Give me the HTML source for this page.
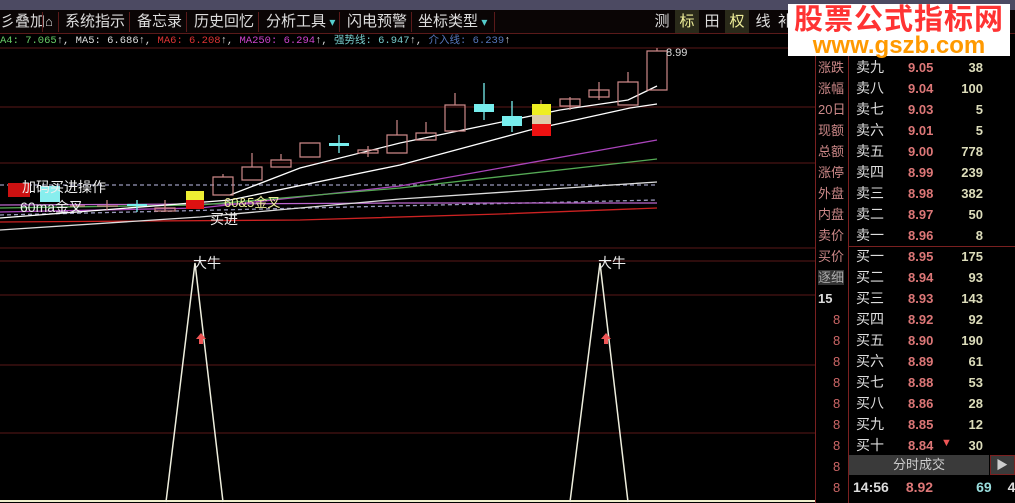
<!DOCTYPE html><html><head><meta charset="utf-8"><style>
html,body{margin:0;width:1015px;height:503px;overflow:hidden;background:#000}
body{font-family:"Liberation Sans","Noto Sans CJK SC",sans-serif;position:relative}
.a{position:absolute;white-space:nowrap}
.tb{top:10px;height:23px;font-size:15px;color:#ddd;line-height:23px}
.sep{position:absolute;top:12px;width:1px;height:20px;background:#5a1a1a}
</style></head><body>
<div class="a" style="left:0;top:0;width:1015px;height:10px;background:#4c4a62"></div>
<div class="a" style="left:0;top:10px;width:1015px;height:23px;background:#0a0505;border-bottom:1px solid #5a1a1a"></div>
<div class="a tb" style="left:0">彡叠加</div>
<div class="sep" style="left:42px"></div><div class="a tb" style="left:45px;font-size:13px">⌂</div>
<div class="sep" style="left:58px"></div><div class="a tb" style="left:65px">系统指示</div>
<div class="sep" style="left:129px"></div><div class="a tb" style="left:137px">备忘录</div>
<div class="sep" style="left:186px"></div><div class="a tb" style="left:194px">历史回忆</div>
<div class="sep" style="left:258px"></div><div class="a tb" style="left:266px">分析工具<span style="color:#5cc;font-size:12px"> ▾</span></div>
<div class="sep" style="left:339px"></div><div class="a tb" style="left:347px">闪电预警</div>
<div class="sep" style="left:411px"></div><div class="a tb" style="left:418px">坐标类型<span style="color:#5cc;font-size:12px"> ▾</span></div>
<div class="sep" style="left:494px"></div>
<div class="a tb" style="left:651px;width:22px;text-align:center">测</div>
<div class="a tb" style="left:675px;width:24px;text-align:center;background:#2a2a1a;color:#ee9">标</div>
<div class="a tb" style="left:701px;width:22px;text-align:center">田</div>
<div class="a tb" style="left:725px;width:24px;text-align:center;background:#2a2a1a;color:#ee9">权</div>
<div class="a tb" style="left:752px;width:22px;text-align:center">线</div>
<div class="a tb" style="left:778px">补</div>
<div class="a" style="left:0;top:34px;font-size:10.5px;line-height:14px;font-family:'Liberation Mono','Noto Sans CJK SC',monospace;color:#ddd"><span style="color:#6c6">A4: 7.065</span>↑, MA5: 6.686↑, <span style="color:#d33">MA6: 6.208</span>↑, <span style="color:#c4c">MA250: 6.294</span>↑, <span style="color:#7cc">强势线: 6.947</span>↑, <span style="color:#57b">介入线: 6.239</span>↑</div>
<svg class="a" style="left:0;top:0" width="815" height="503">
<g stroke="#5a1818" stroke-width="1"><line x1="0" y1="48" x2="815" y2="48"/><line x1="0" y1="107" x2="815" y2="107"/><line x1="0" y1="163" x2="815" y2="163"/><line x1="0" y1="248" x2="815" y2="248"/><line x1="0" y1="261" x2="815" y2="261"/><line x1="0" y1="295" x2="815" y2="295"/><line x1="0" y1="365" x2="815" y2="365"/><line x1="0" y1="433" x2="815" y2="433"/></g>
<line x1="0" y1="501" x2="815" y2="501" stroke="#eec" stroke-width="2"/>
<g fill="none" stroke-width="1.3">
<line x1="0" y1="185" x2="657" y2="185" stroke="#99b" stroke-dasharray="4,3"/>
<line x1="0" y1="215" x2="657" y2="200" stroke="#99b" stroke-dasharray="4,3"/>
<polyline points="0,222 300,220 500,214 657,208" stroke="#c22"/>
<polyline points="0,205 400,203 657,203" stroke="#b6c"/>
<polyline points="0,212 200,208 400,186 657,140" stroke="#a4b"/>
<polyline points="0,208 200,205 400,188 657,159" stroke="#5a5"/>
<polyline points="0,230 200,217 400,199 657,182" stroke="#ddd"/>
<polyline points="0,218 230,200 400,165 530,130 630,108 657,104" stroke="#fff"/>
<polyline points="230,195 300,168 400,143 560,110 628,100 657,86" stroke="#fff"/>
</g>
<g stroke="#c88" fill="none" stroke-width="1.2">
<path d="M223 174V177M213 177h20v18h-20z"/><path d="M252 153V167M242 167h20v13h-20z"/><path d="M281 154V160M271 160h20v7h-20z"/><path d="M300 143h20v14h-20z"/><path d="M368 146V157M358 150h20v3h-20z"/><path d="M397 120V135M387 135h20v18h-20z"/><path d="M426 122V133M416 133h20v7h-20z"/><path d="M455 93V105M445 105h20v26h-20z"/><path d="M570 97V110M560 99h20v7h-20z"/><path d="M599 82V100M589 90h20v7h-20z"/><path d="M628 72V82M618 82h20v23h-20z"/><path d="M657 48V51M647 51h20v39h-20z"/><path d="M165 200V212M155 208h20v3h-20z"/><path d="M70 206h15M107 200V210M97 206h21"/></g>
<g stroke="#7ee" stroke-width="1.3"><path d="M339 135V153M484 83V120M512 101V132M137 200V212"/></g>
<rect x="329" y="143" width="20" height="3" fill="#7ee"/><rect x="474" y="104" width="20" height="8" fill="#7ee"/><rect x="502" y="116" width="20" height="10" fill="#7ee"/><rect x="127" y="204" width="20" height="2" fill="#7ee"/>
<rect x="40" y="186" width="20" height="16" fill="#8ee"/><rect x="8" y="183" width="22" height="14" fill="#c11"/>
<rect x="186" y="191" width="18" height="9" fill="#ee3"/><rect x="186" y="200" width="18" height="9" fill="#d11"/>
<line x1="541" y1="100" x2="541" y2="104" stroke="#c88"/><rect x="532" y="104" width="19" height="11" fill="#ee2"/><rect x="532" y="115" width="19" height="9" fill="#dca"/><rect x="532" y="124" width="19" height="12" fill="#e11"/>
<g stroke="#eed" stroke-width="1.5" fill="none"><polyline points="166,502 195,263 223,502"/><polyline points="570,502 600,263 628,502"/></g>
<path d="M201 333l-5 6h3v5h4v-5h3z M606 333l-5 6h3v5h4v-5h3z" fill="#e55"/>
<g font-size="14" fill="#eee"><text x="22" y="192">加码买进操作</text><text x="20" y="212">60ma金叉</text><text x="210" y="224">买进</text><text x="193" y="268">大牛</text><text x="598" y="268">大牛</text></g>
<text x="224" y="207" font-size="13" fill="#ee9">60&amp;5金叉</text>
<text x="666" y="56" font-size="11" fill="#ddd">8.99</text>
</svg>
<div class="a" style="left:815px;top:48px;width:1px;height:455px;background:#7a2020"></div>
<div class="a" style="left:848px;top:48px;width:1px;height:455px;background:#7a2020"></div>
<div class="a" style="left:848px;top:246px;width:167px;height:1px;background:#7a2020"></div>
<div class="a" style="left:788px;top:4px;width:222px;height:52px;background:#fff;font-weight:bold;text-align:center"><div style="font-size:29px;color:#f33;line-height:32px;letter-spacing:1px">股票公式指标网</div><div style="font-size:24px;color:#f90;line-height:20px">www.gszb.com</div></div>
<div class="a" style="left:818px;top:57px;font-size:13px;color:#c88;line-height:21px;width:30px;overflow:hidden">涨跌<br>涨幅<br>20日<br>现额<br>总额<br>涨停<br>外盘<br>内盘<br>卖价<br>买价<br><span style="background:#333;color:#aaa">逐细</span><br><span style="color:#ddd;font-weight:bold">15</span></div>
<div class="a" style="left:833px;top:309px;font-size:13px;color:#c66;line-height:21px;height:194px;overflow:hidden">8<br>8<br>8<br>8<br>8<br>8<br>8<br>8<br>8</div>
<div class="a" style="left:856px;top:57px;width:160px;font-size:14px;line-height:21px;color:#ddd">
<div>卖九</div><div>卖八</div><div>卖七</div><div>卖六</div><div>卖五</div><div>卖四</div><div>卖三</div><div>卖二</div><div>卖一</div><div>买一</div><div>买二</div><div>买三</div><div>买四</div><div>买五</div><div>买六</div><div>买七</div><div>买八</div><div>买九</div><div>买十</div></div>
<div class="a" style="left:908px;top:57px;font-size:13px;line-height:21px;color:#d77;font-weight:bold">9.05<br>9.04<br>9.03<br>9.01<br>9.00<br>8.99<br>8.98<br>8.97<br>8.96<br>8.95<br>8.94<br>8.93<br>8.92<br>8.90<br>8.89<br>8.88<br>8.86<br>8.85<br>8.84</div>
<div class="a" style="left:940px;top:57px;width:43px;text-align:right;font-size:13px;line-height:21px;color:#ddb;font-weight:bold">38<br>100<br>5<br>5<br>778<br>239<br>382<br>50<br>8<br>175<br>93<br>143<br>92<br>190<br>61<br>53<br>28<br>12<br>30</div>
<div class="a" style="left:941px;top:437px;color:#e55;font-size:11px">▼</div>
<div class="a" style="left:849px;top:455px;width:140px;height:20px;background:#3a3a3a;color:#ccc;font-size:13px;line-height:20px;text-align:center">分时成交</div>
<div class="a" style="left:990px;top:455px;width:25px;height:20px;background:#3a3a3a;border:1px solid #7a2020;box-sizing:border-box;color:#ccc;font-size:12px;line-height:18px;padding-left:5px">▶</div>
<div class="a" style="left:853px;top:478px;font-size:14px;line-height:18px;font-weight:bold"><span style="color:#ddd">14:56</span><span style="color:#d77;margin-left:17px">8.92</span><span style="color:#9dd;margin-left:43px">69</span><span style="color:#ddd;margin-left:16px">4</span></div>
</body></html>
